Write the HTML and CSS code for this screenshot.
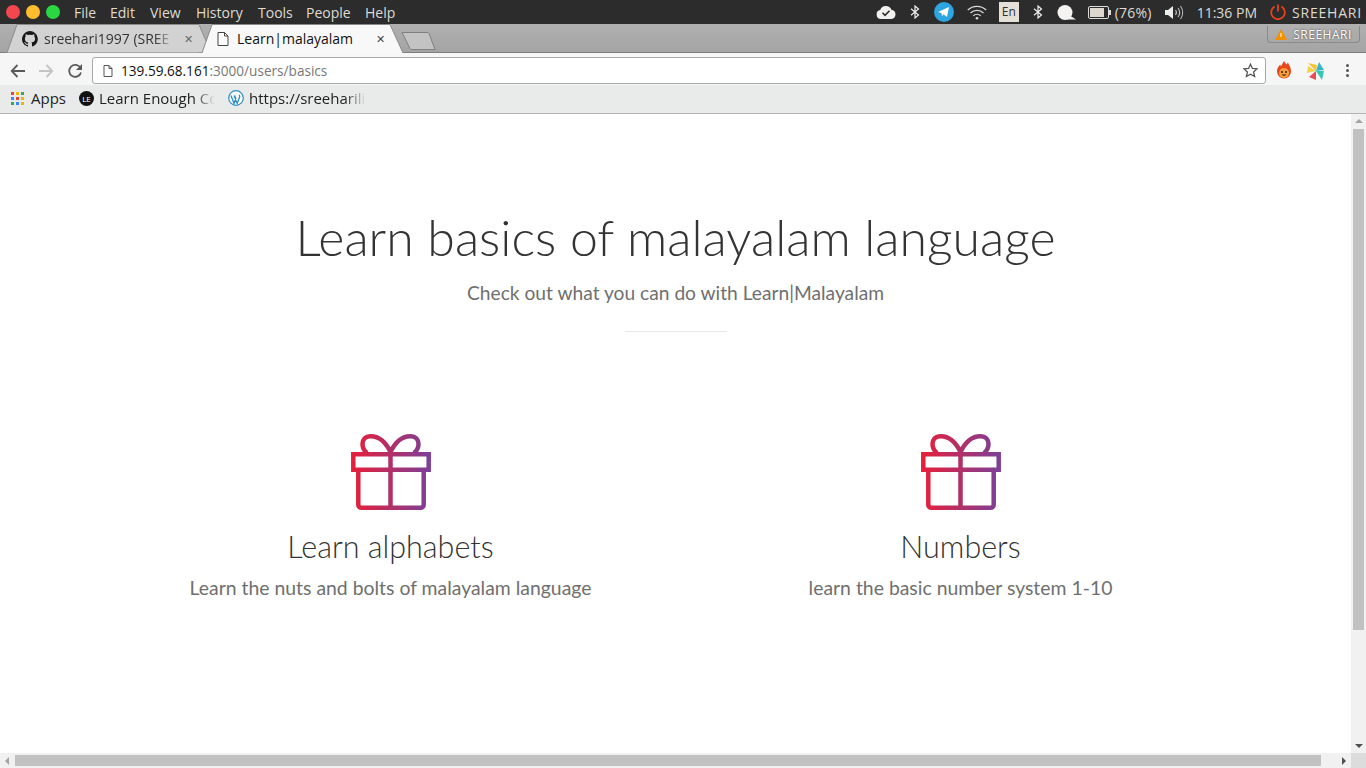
FILE: index.html
```html
<!doctype html>
<html lang="en">
	<head>
		<title>Learn|malayalam</title>
		<meta charset="utf-8">
		<link rel="stylesheet" href="styles.css">
	</head>

	<body>
		<svg class="defs" width="0" height="0">
			<defs>
				<linearGradient id="giftgrad" x1="0" y1="0" x2="1" y2="0">
					<stop offset="0" stop-color="#e5203a"/>
					<stop offset="1" stop-color="#7d3f98"/>
				</linearGradient>
			</defs>
		</svg>

		<!-- desktop panel -->
		<div class="panel">
			<div class="lights">
				<span class="light red"></span>
				<span class="light yellow"></span>
				<span class="light green"></span>
			</div>
			<div class="menu">
				<span>File</span><span>Edit</span><span>View</span><span>History</span><span>Tools</span><span>People</span><span>Help</span>
			</div>
			<div class="tray">
				<svg class="t-cloud" width="20" height="14" viewBox="0 0 20 14"><path d="M5 14a4.5 4.5 0 0 1-.8-8.9A6 6 0 0 1 15.4 4.7 4.7 4.7 0 0 1 15.5 14z" fill="#f2f1ef"/><path d="M6.5 7.8l2.5 2.5 4.5-4.5" fill="none" stroke="#2c2c2c" stroke-width="1.6"/></svg>
				<svg class="t-bt" width="10" height="14" viewBox="0 0 10 14"><path d="M1 3.800l7.500 6.200-3.500 3V1l3.500 3L1 10.200" fill="none" stroke="#eee" stroke-width="1.2"/></svg>
				<svg class="t-tg" width="20" height="20" viewBox="0 0 20 20"><circle cx="10" cy="10" r="10" fill="#2ca5e0"/><path d="M4 10l11-5-2 10-3.500-2.800-1.500 2-.6-3.300z" fill="#fff"/></svg>
				<svg class="t-wifi" width="20" height="15" viewBox="0 0 20 15"><g fill="none" stroke="#ddd" stroke-width="1.3"><path d="M.8 5a13.500 13.500 0 0 1 18.400 0"/><path d="M3.500 8a9.500 9.500 0 0 1 13 0"/><path d="M6.300 10.800a5.500 5.500 0 0 1 7.400 0"/></g><circle cx="10" cy="13.3" r="1.3" fill="#ddd"/></svg>
				<span class="t-en">En</span>
				<svg class="t-bt2" width="10" height="14" viewBox="0 0 10 14"><path d="M1 3.800l7.500 6.200-3.500 3V1l3.500 3L1 10.200" fill="none" stroke="#eee" stroke-width="1.2"/></svg>
				<svg class="t-bubble" width="19" height="15" viewBox="0 0 19 15"><circle cx="8" cy="7.5" r="7.5" fill="#f4f3f1"/><path d="M12 10l7 4.500h-9z" fill="#f4f3f1"/></svg>
				<svg class="t-batt" width="23" height="13" viewBox="0 0 23 13"><rect x=".5" y=".5" width="20" height="12" rx="1.5" fill="none" stroke="#ddd"/><rect x="2" y="2" width="14" height="9" fill="#dcd8cf"/><rect x="21" y="4" width="2" height="5" fill="#ddd"/></svg>
				<span class="t-pct">(76%)</span>
				<svg class="t-vol" width="20" height="15" viewBox="0 0 20 15"><path d="M0 5h3l5-4v13l-5-4H0z" fill="#eee"/><g fill="none" stroke="#bbb" stroke-width="1.1"><path d="M10.500 5a4 4 0 0 1 0 5"/><path d="M13 3a7.500 7.500 0 0 1 0 9"/><path d="M15.500 1a11 11 0 0 1 0 13"/></g></svg>
				<span class="t-time">11:36 PM</span>
				<svg class="t-power" width="16" height="16" viewBox="0 0 16 16"><g fill="none" stroke="#e5431a" stroke-width="1.8"><path d="M4.600 2.500a6.800 6.800 0 1 0 6.800 0"/><path d="M8 .5v7"/></g></svg>
				<span class="t-user">SREEHARI</span>
			</div>
		</div>

		<!-- tab strip -->
		<div class="tabstrip">
			<div class="tab tab-off">
				<svg class="tabshape" width="210" height="29" viewBox="0 0 210 29"><path d="M0 28.500h2L12 .5h182l12 28" fill="#d2d2d2" stroke="#8b8b8b"/></svg>
				<svg class="favicon" width="16" height="16" viewBox="0 0 16 16"><path fill="#191717" d="M8 0a8 8 0 0 0-2.500 15.600c.4.100.5-.2.500-.4v-1.400c-2.200.5-2.700-1-2.700-1-.4-.9-.9-1.200-.9-1.200-.7-.5.100-.5.100-.5.800.100 1.200.8 1.200.8.700 1.200 1.900.9 2.300.7.100-.5.300-.9.500-1.100-1.800-.2-3.600-.9-3.600-4 0-.9.300-1.600.8-2.100-.1-.2-.4-1 .1-2.100 0 0 .7-.2 2.200.8a7.500 7.500 0 0 1 4 0c1.500-1 2.200-.8 2.200-.8.400 1.100.2 1.900.1 2.100.5.600.8 1.300.8 2.100 0 3.100-1.900 3.700-3.700 3.900.3.300.6.800.6 1.500v2.200c0 .2.100.5.600.4A8 8 0 0 0 8 0z"/></svg>
				<span class="tabtitle fade-title">sreehari1997 (SREE</span>
				<span class="tabclose">&#10005;</span>
			</div>
			<div class="tab tab-on">
				<svg class="tabshape" width="210" height="29" viewBox="0 0 210 29"><path d="M0 29h4L14 .5h178l13 28.500h3" fill="#f8f8f8" stroke="#8b8b8b"/></svg>
				<svg class="favicon" width="12" height="14" viewBox="0 0 12 14"><path d="M1 .5h6.500L11 4v9.500H1z" fill="#fff" stroke="#444"/><path d="M7.500 .5V4H11" fill="none" stroke="#444"/></svg>
				<span class="tabtitle">Learn|malayalam</span>
				<span class="tabclose dark">&#10005;</span>
			</div>
			<svg class="newtab" width="36" height="20" viewBox="0 0 36 20"><path d="M1 1.500h25a2 2 0 0 1 2 1L34 18.500H11a2 2 0 0 1-2-1z" fill="#c3c3c3" stroke="#808080"/></svg>
			<div class="profile">
				<svg width="12" height="11" viewBox="0 0 12 11"><path d="M6 0l6 11H0z" fill="#f29100"/><path d="M5.500 4h1v4h-1z" fill="#fff"/></svg>
				<span>SREEHARI</span>
			</div>
		</div>

		<!-- toolbar -->
		<div class="toolbar">
			<svg class="tb-back" width="16" height="14" viewBox="0 0 16 14"><path d="M15 7H2M7.500 1L1.700 7l5.800 6" fill="none" stroke="#5a5a5a" stroke-width="1.8"/></svg>
			<svg class="tb-fwd" width="16" height="14" viewBox="0 0 16 14"><path d="M1 7h13M8.500 1l5.800 6-5.800 6" fill="none" stroke="#c4c4c4" stroke-width="1.8"/></svg>
			<svg class="tb-reload" width="16" height="16" viewBox="0 0 16 16"><path d="M13.500 5A6 6 0 1 0 14 9.500" fill="none" stroke="#5a5a5a" stroke-width="1.8"/><path d="M15 1v6H9z" fill="#5a5a5a"/></svg>
			<div class="omnibox">
				<svg class="page-icon" width="10" height="12" viewBox="0 0 10 12"><path d="M1 .5h5L9 3.500v8H1z" fill="#fff" stroke="#555"/><path d="M6 .5v3h3" fill="none" stroke="#555"/></svg>
				<span class="url"><b>139.59.68.161</b>:3000/users/basics</span>
				<svg class="star" width="15" height="15" viewBox="0 0 15 15"><path d="M7.500 1.200l1.900 4.200 4.600.5-3.400 3.100 1 4.500-4.100-2.300-4.100 2.300 1-4.500L1 5.900l4.600-.5z" fill="none" stroke="#555" stroke-width="1.3"/></svg>
			</div>
			<svg class="ext-fire" width="16" height="19" viewBox="0 0 16 19"><path d="M8 0c1 2 2 3 3 3.500 0-1 .5-1.500 1-2 .5 2 3 4 3 9a7 7 0 0 1-14 0c0-4 2-5 3-7 .5 1 1 1.500 1.500 1.500C6 3 7 2 8 0z" fill="#e8471c"/><circle cx="8" cy="12" r="5" fill="#f6a13a"/><circle cx="6" cy="11" r="1" fill="#3c1c05"/><circle cx="10" cy="11" r="1" fill="#3c1c05"/><path d="M5.500 13.500a3 3 0 0 0 5 0z" fill="#3c1c05"/></svg>
			<svg class="ext-wheel" width="18" height="18" viewBox="0 0 18 18"><path d="M1 1l9 2-1 6z" fill="#f6c338"/><path d="M9 9l3-9 5 8z" fill="#35b6c9"/><path d="M9 9h8l-2 9z" fill="#35c9b4"/><path d="M9 9v9l-7-3z" fill="#ee4b5a"/><path d="M9 9l-9 2 1-7z" fill="#f5d24a"/></svg>
			<div class="dots"><i></i><i></i><i></i></div>
		</div>

		<!-- bookmarks -->
		<div class="bookmarks">
			<div class="apps">
				<i class="r"></i><i class="y"></i><i class="g"></i>
				<i class="b"></i><i class="r"></i><i class="y"></i>
				<i class="g"></i><i class="b"></i><i class="y"></i>
			</div>
			<span class="bm-apps">Apps</span>
			<span class="le-icon">LE</span>
			<span class="bm bm-le">Learn Enough Co</span>
			<svg class="wp-icon" width="16" height="16" viewBox="0 0 16 16"><circle cx="8" cy="8" r="7.3" fill="#fff" stroke="#2b8fc4" stroke-width="1.2"/><path d="M3 5.500l3 8 1.700-5-1-3M6 5.500l3.200 8 2.400-6.500c.4-1.200-.2-1.800-.4-2.200" fill="none" stroke="#2b8fc4" stroke-width="1.3"/></svg>
			<span class="bm bm-wp">https://sreeharili</span>
		</div>

		<!-- page -->
		<div class="viewport">
			<div class="page">
				<div class="intro">
					<h1>Learn basics of malayalam language</h1>
					<p>Check out what you can do with Learn|Malayalam</p>
					<hr>
				</div>
				<div class="features">
					<div class="feature">
						<svg class="gift" width="80" height="76" viewBox="0 0 80 76"><path d="M2.300 20.200h75.400v15.600H2.300zM7.300 35.800v34.900a3 3 0 0 0 3 3h59.400a3 3 0 0 0 3-3V35.800M39.500 20.200v53.500M39.500 18C35 9 28 2.300 20 2.300 14 2.300 11.500 6 11.500 10c0 4 2 7 4.500 9M39.500 18C44 9 51 2.300 59 2.300 65 2.300 67.500 6 67.500 10c0 4-2 7-4.500 9" fill="none" stroke="url(#giftgrad)" stroke-width="4.5"/></svg>
						<h3>Learn alphabets</h3>
						<p>Learn the nuts and bolts of malayalam language</p>
					</div>
					<div class="feature">
						<svg class="gift" width="80" height="76" viewBox="0 0 80 76"><path d="M2.300 20.200h75.400v15.600H2.300zM7.300 35.800v34.900a3 3 0 0 0 3 3h59.400a3 3 0 0 0 3-3V35.800M39.500 20.200v53.500M39.500 18C35 9 28 2.300 20 2.300 14 2.300 11.500 6 11.500 10c0 4 2 7 4.500 9M39.500 18C44 9 51 2.300 59 2.300 65 2.300 67.500 6 67.500 10c0 4-2 7-4.500 9" fill="none" stroke="url(#giftgrad)" stroke-width="4.5"/></svg>
						<h3>Numbers</h3>
						<p>learn the basic number system 1-10</p>
					</div>
				</div>
			</div>
			<div class="vbar">
				<i class="arrow up"></i>
				<div class="vthumb"></div>
				<i class="arrow down"></i>
			</div>
			<div class="hbar">
				<i class="arrow left"></i>
				<div class="hthumb"></div>
				<i class="arrow right"></i>
				<div class="corner"></div>
			</div>
		</div>
	</body>
</html>
```

FILE: styles.css
```css
html, body {
	width:100%;
	height:100%;
	margin:0;
	padding:0;
	overflow:hidden;
	background:#fff;
	font-family:"Open Sans", "Noto Sans", sans-serif;
}

body {
	display:flex;
	flex-direction:column;
}

.defs {
	position:absolute;
}

/* panel */
.panel {
	flex:0 0 24px;
	height:24px;
	display:flex;
	align-items:center;
	background:#2c2c2c;
	color:#dfdbd2;
	font-size:14px;
}

.lights {
	display:flex;
	gap:6px;
	margin-left:6px;
}

.light {
	width:14px;
	height:14px;
	border-radius:50%;
}

.red { background:#f4464f; }
.yellow { background:#fdbd2e; }
.green { background:#2bd644; }

.menu {
	display:flex;
	margin-left:14px;
}

.menu span:nth-child(1) { width:36px; }
.menu span:nth-child(2) { width:40px; }
.menu span:nth-child(3) { width:46px; }
.menu span:nth-child(4) { width:62px; }
.menu span:nth-child(5) { width:48px; }
.menu span:nth-child(6) { width:59px; }

.tray {
	margin-left:auto;
	display:flex;
	align-items:center;
	margin-right:4px;
}

.t-bt { margin-left:14px; }
.t-tg { margin-left:14px; }
.t-wifi { margin-left:13px; }

.t-en {
	margin-left:12px;
	width:20px;
	height:20px;
	line-height:20px;
	text-align:center;
	background:#e4e0d8;
	color:#333;
	font-size:12px;
}

.t-bt2 { margin-left:14px; }
.t-bubble { margin-left:14px; }
.t-batt { margin-left:12px; }
.t-pct { margin-left:4px; letter-spacing:.2px; }
.t-vol { margin-left:13px; }
.t-time { margin-left:12px; }
.t-power { margin-left:13px; }
.t-user { margin-left:6px; letter-spacing:.8px; }

/* tabs */
.tabstrip {
	flex:0 0 29px;
	height:29px;
	display:flex;
	align-items:flex-start;
	background:linear-gradient(#b0b0b0, #a4a4a4);
	box-sizing:border-box;
	border-bottom:1px solid #7f7f7f;
	padding-left:5px;
}

.tab {
	position:relative;
	width:200px;
	height:29px;
	display:flex;
	align-items:center;
	padding:0 0 0 17px;
	box-sizing:border-box;
	margin-right:-7px;
	font-size:14px;
	color:#333;
}

.tab-on {
	color:#111;
	padding-left:19px;
	z-index:1;
}

.tabshape {
	position:absolute;
	left:0;
	top:0;
}

.tab .favicon,
.tabtitle,
.tabclose {
	position:relative;
}

.tab .favicon {
	flex:none;
}

.tabtitle {
	flex:none;
	margin-left:6px;
	width:130px;
	white-space:nowrap;
	-webkit-mask-image:linear-gradient(90deg, #000 85%, transparent);
}

.tab-on .tabtitle {
	margin-left:8px;
	-webkit-mask-image:none;
}

.tabclose {
	margin-left:10px;
	font-size:11px;
	color:#666;
}

.tabclose.dark {
	color:#444;
	margin-left:9px;
}

.newtab {
	margin:7px 0 0 10px;
}

.profile {
	margin:2px 6px 0 auto;
	width:93px;
	height:17px;
	box-sizing:border-box;
	border:1px solid #8a8a8a;
	border-top:0;
	border-radius:0 0 4px 4px;
	display:flex;
	align-items:center;
	justify-content:center;
	gap:6px;
	font-size:12px;
	letter-spacing:.5px;
	color:#fff;
	text-shadow:0 0 2px #333;
}

/* toolbar */
.toolbar {
	flex:0 0 32px;
	height:32px;
	box-sizing:border-box;
	padding-top:3px;
	display:flex;
	align-items:center;
	background:#f6f6f6;
}

.tb-back { margin-left:10px; }
.tb-fwd { margin-left:12px; }
.tb-reload { margin-left:13px; }

.omnibox {
	margin-left:9px;
	width:1174px;
	height:27px;
	box-sizing:border-box;
	display:flex;
	align-items:center;
	background:#fff;
	border:1px solid #a9a9a9;
	border-radius:3px;
	padding:0 7px 0 10px;
	font-size:13.6px;
	color:#777;
}

.url {
	margin-left:8px;
}

.url b {
	font-weight:400;
	color:#111;
}

.star {
	margin-left:auto;
}

.ext-fire { margin-left:10px; }
.ext-wheel { margin-left:15px; }

.dots {
	margin-left:21px;
	display:flex;
	flex-direction:column;
	gap:2px;
}

.dots i {
	width:3px;
	height:3px;
	border-radius:50%;
	background:#555;
}

/* bookmarks */
.bookmarks {
	flex:0 0 29px;
	height:29px;
	box-sizing:border-box;
	display:flex;
	align-items:center;
	background:#e9ebeb;
	border-bottom:1px solid #b4b4b4;
	padding:0 0 2px 11px;
	font-size:15px;
	color:#222;
}

.apps {
	display:grid;
	grid-template-columns:repeat(3, 3px);
	grid-auto-rows:3px;
	gap:2px;
}

.apps .r { background:#e2453b; }
.apps .y { background:#f4b400; }
.apps .g { background:#34a853; }
.apps .b { background:#4285f4; }

.bm-apps { margin-left:7px; }

.le-icon {
	margin-left:13px;
	width:15px;
	height:15px;
	border-radius:50%;
	background:#111;
	color:#fff;
	font-size:8px;
	line-height:15px;
	text-align:center;
}

.bm {
	white-space:nowrap;
	-webkit-mask-image:linear-gradient(90deg, #000 82%, transparent);
}

.bm-le {
	margin-left:5px;
	width:116px;
}

.wp-icon { margin-left:13px; }

.bm-wp {
	margin-left:5px;
	width:117px;
}

/* page */
.viewport {
	flex:1;
	min-height:0;
	display:grid;
	grid-template-columns:1fr 15px;
	grid-template-rows:1fr 15px;
}

.page {
	min-width:0;
	overflow:hidden;
	font-family:Lato, "Open Sans", sans-serif;
	text-align:center;
}

.intro {
	padding-top:91px;
}

h1 {
	margin:0;
	font-size:50px;
	line-height:64px;
	font-weight:300;
	color:#333;
}

.intro p {
	margin:11px 0 0;
	font-size:19.2px;
	line-height:26px;
	color:#6f6f6f;
}

hr {
	width:102px;
	height:1px;
	margin:25px auto 0;
	border:0;
	background:#e8e8e8;
}

.features {
	width:1140px;
	margin:102px auto 0;
	display:grid;
	grid-template-columns:1fr 1fr;
}

.gift {
	display:block;
	margin:0 auto;
}

.feature h3 {
	margin:18px 0 0;
	font-size:30.5px;
	line-height:36px;
	font-weight:300;
	color:#333;
}

.feature p {
	margin:11px 0 0;
	font-size:19.4px;
	line-height:26px;
	color:#6f6f6f;
}

/* scrollbars */
.vbar {
	grid-column:2;
	grid-row:1;
	background:#f1f1f1;
	display:flex;
	flex-direction:column;
	align-items:center;
	padding-top:5px;
}

.vthumb {
	width:11px;
	height:501px;
	margin-top:6px;
	background:#c1c1c1;
}

.vbar .down {
	margin-top:auto;
	margin-bottom:5px;
}

.hbar {
	grid-column:1 / 3;
	grid-row:2;
	background:#f1f1f1;
	display:flex;
	align-items:center;
}

.hbar .left {
	margin-left:5px;
}

.hthumb {
	width:1306px;
	height:11px;
	margin-left:6px;
	background:#c1c1c1;
}

.hbar .right {
	margin-left:21px;
}

.corner {
	width:15px;
	height:15px;
	margin-left:auto;
	background:#dcdcdc;
}

.arrow {
	width:0;
	height:0;
	border-style:solid;
}

.up {
	border-width:0 4px 4px;
	border-color:transparent transparent #a3a3a3;
}

.down {
	border-width:4px 4px 0;
	border-color:#505050 transparent transparent;
}

.left {
	border-width:4px 4px 4px 0;
	border-color:transparent #a3a3a3 transparent transparent;
}

.right {
	border-width:4px 0 4px 4px;
	border-color:transparent transparent transparent #505050;
}
```
